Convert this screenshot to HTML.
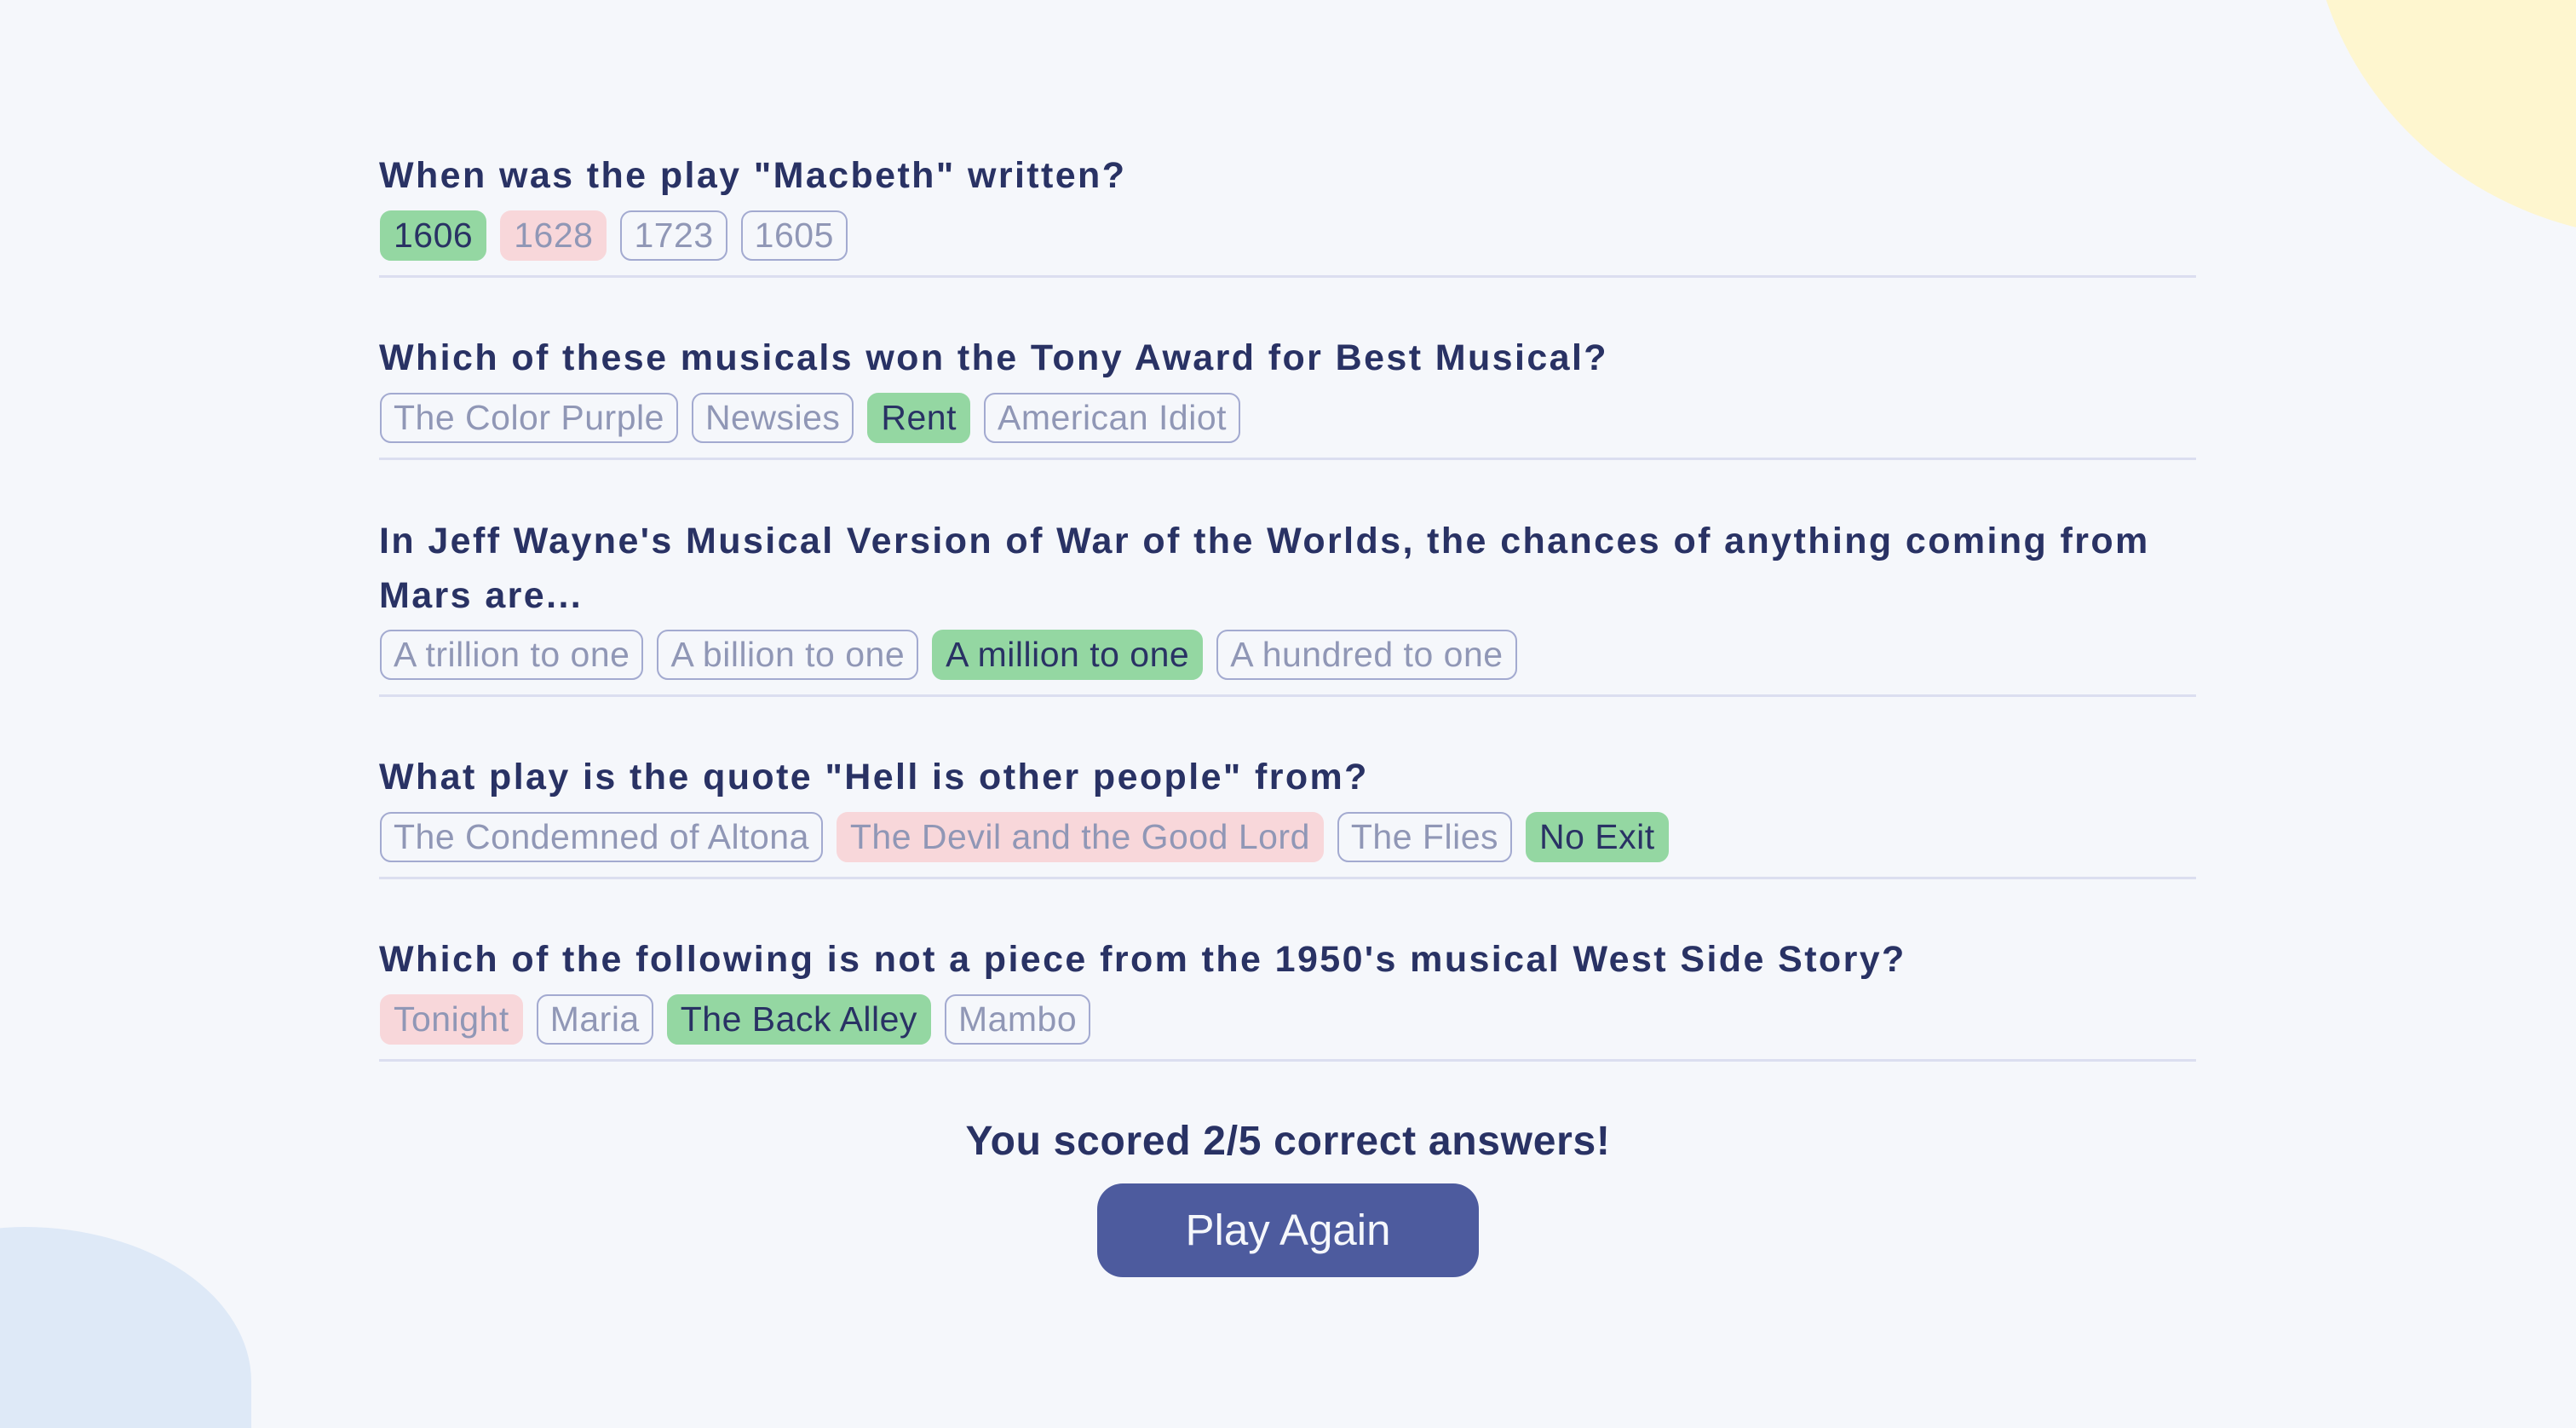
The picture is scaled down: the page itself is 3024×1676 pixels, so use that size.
<!DOCTYPE html>
<html><head><meta charset="utf-8"><style>
html,body{margin:0;padding:0;width:3024px;height:1676px;overflow:hidden}
body{background:#f5f7fb;position:relative;font-family:"Liberation Sans",sans-serif;color:#293264}
.blob1{position:absolute;left:2710px;top:-300px;width:700px;height:580px;background:#fef6cf;border-radius:0 0 0 60%/0 0 0 70%}
.blob2{position:absolute;left:-200px;top:1440px;width:495px;height:236px;background:#dee9f7;border-radius:60% 70% 0 0/100% 100% 0 0}
.q{position:absolute;left:445px;width:2140px;font-weight:bold;font-size:43px;line-height:64px;letter-spacing:2.4px}
.opts{position:absolute;left:446px;height:59px;display:flex}
.o{box-sizing:border-box;height:59px;line-height:55px;padding:0 14px;margin-right:16px;border:2px solid #a3aad0;border-radius:13px;font-size:41px;letter-spacing:0.5px;color:#9097b6;white-space:nowrap}
.g{background:#94d7a2;border-color:#94d7a2;color:#293264}
.r{background:#f8d7da;border-color:#f8d7da;color:#9097b6}
.hr{position:absolute;left:445px;width:2133px;height:3px;background:#dbdef0}
.score{position:absolute;left:0;width:3024px;top:1308px;text-align:center;font-weight:bold;font-size:48px;line-height:64px;letter-spacing:0.7px}
.btn{position:absolute;left:1288px;top:1389px;width:448px;height:110px;background:#4d5b9e;border-radius:30px;color:#f5f7fb;font-size:51px;line-height:110px;text-align:center}
</style></head><body>
<div class="blob1"></div><div class="blob2"></div>

<div class="q" style="top:174px">When was the play "Macbeth" written?</div>
<div class="opts" style="top:247px"><div class="o g">1606</div><div class="o r">1628</div><div class="o">1723</div><div class="o">1605</div></div>
<div class="hr" style="top:323px"></div>

<div class="q" style="top:388px">Which of these musicals won the Tony Award for Best Musical?</div>
<div class="opts" style="top:461px"><div class="o">The Color Purple</div><div class="o">Newsies</div><div class="o g">Rent</div><div class="o">American Idiot</div></div>
<div class="hr" style="top:537px"></div>

<div class="q" style="top:603px">In Jeff Wayne's Musical Version of War of the Worlds, the chances of anything coming from<br>Mars are...</div>
<div class="opts" style="top:739px"><div class="o">A trillion to one</div><div class="o">A billion to one</div><div class="o g">A million to one</div><div class="o">A hundred to one</div></div>
<div class="hr" style="top:815px"></div>

<div class="q" style="top:880px">What play is the quote "Hell is other people" from?</div>
<div class="opts" style="top:953px"><div class="o">The Condemned of Altona</div><div class="o r">The Devil and the Good Lord</div><div class="o">The Flies</div><div class="o g">No Exit</div></div>
<div class="hr" style="top:1029px"></div>

<div class="q" style="top:1094px">Which of the following is not a piece from the 1950's musical West Side Story?</div>
<div class="opts" style="top:1167px"><div class="o r">Tonight</div><div class="o">Maria</div><div class="o g">The Back Alley</div><div class="o">Mambo</div></div>
<div class="hr" style="top:1243px"></div>

<div class="score">You scored 2/5 correct answers!</div>
<div class="btn">Play Again</div>
</body></html>
